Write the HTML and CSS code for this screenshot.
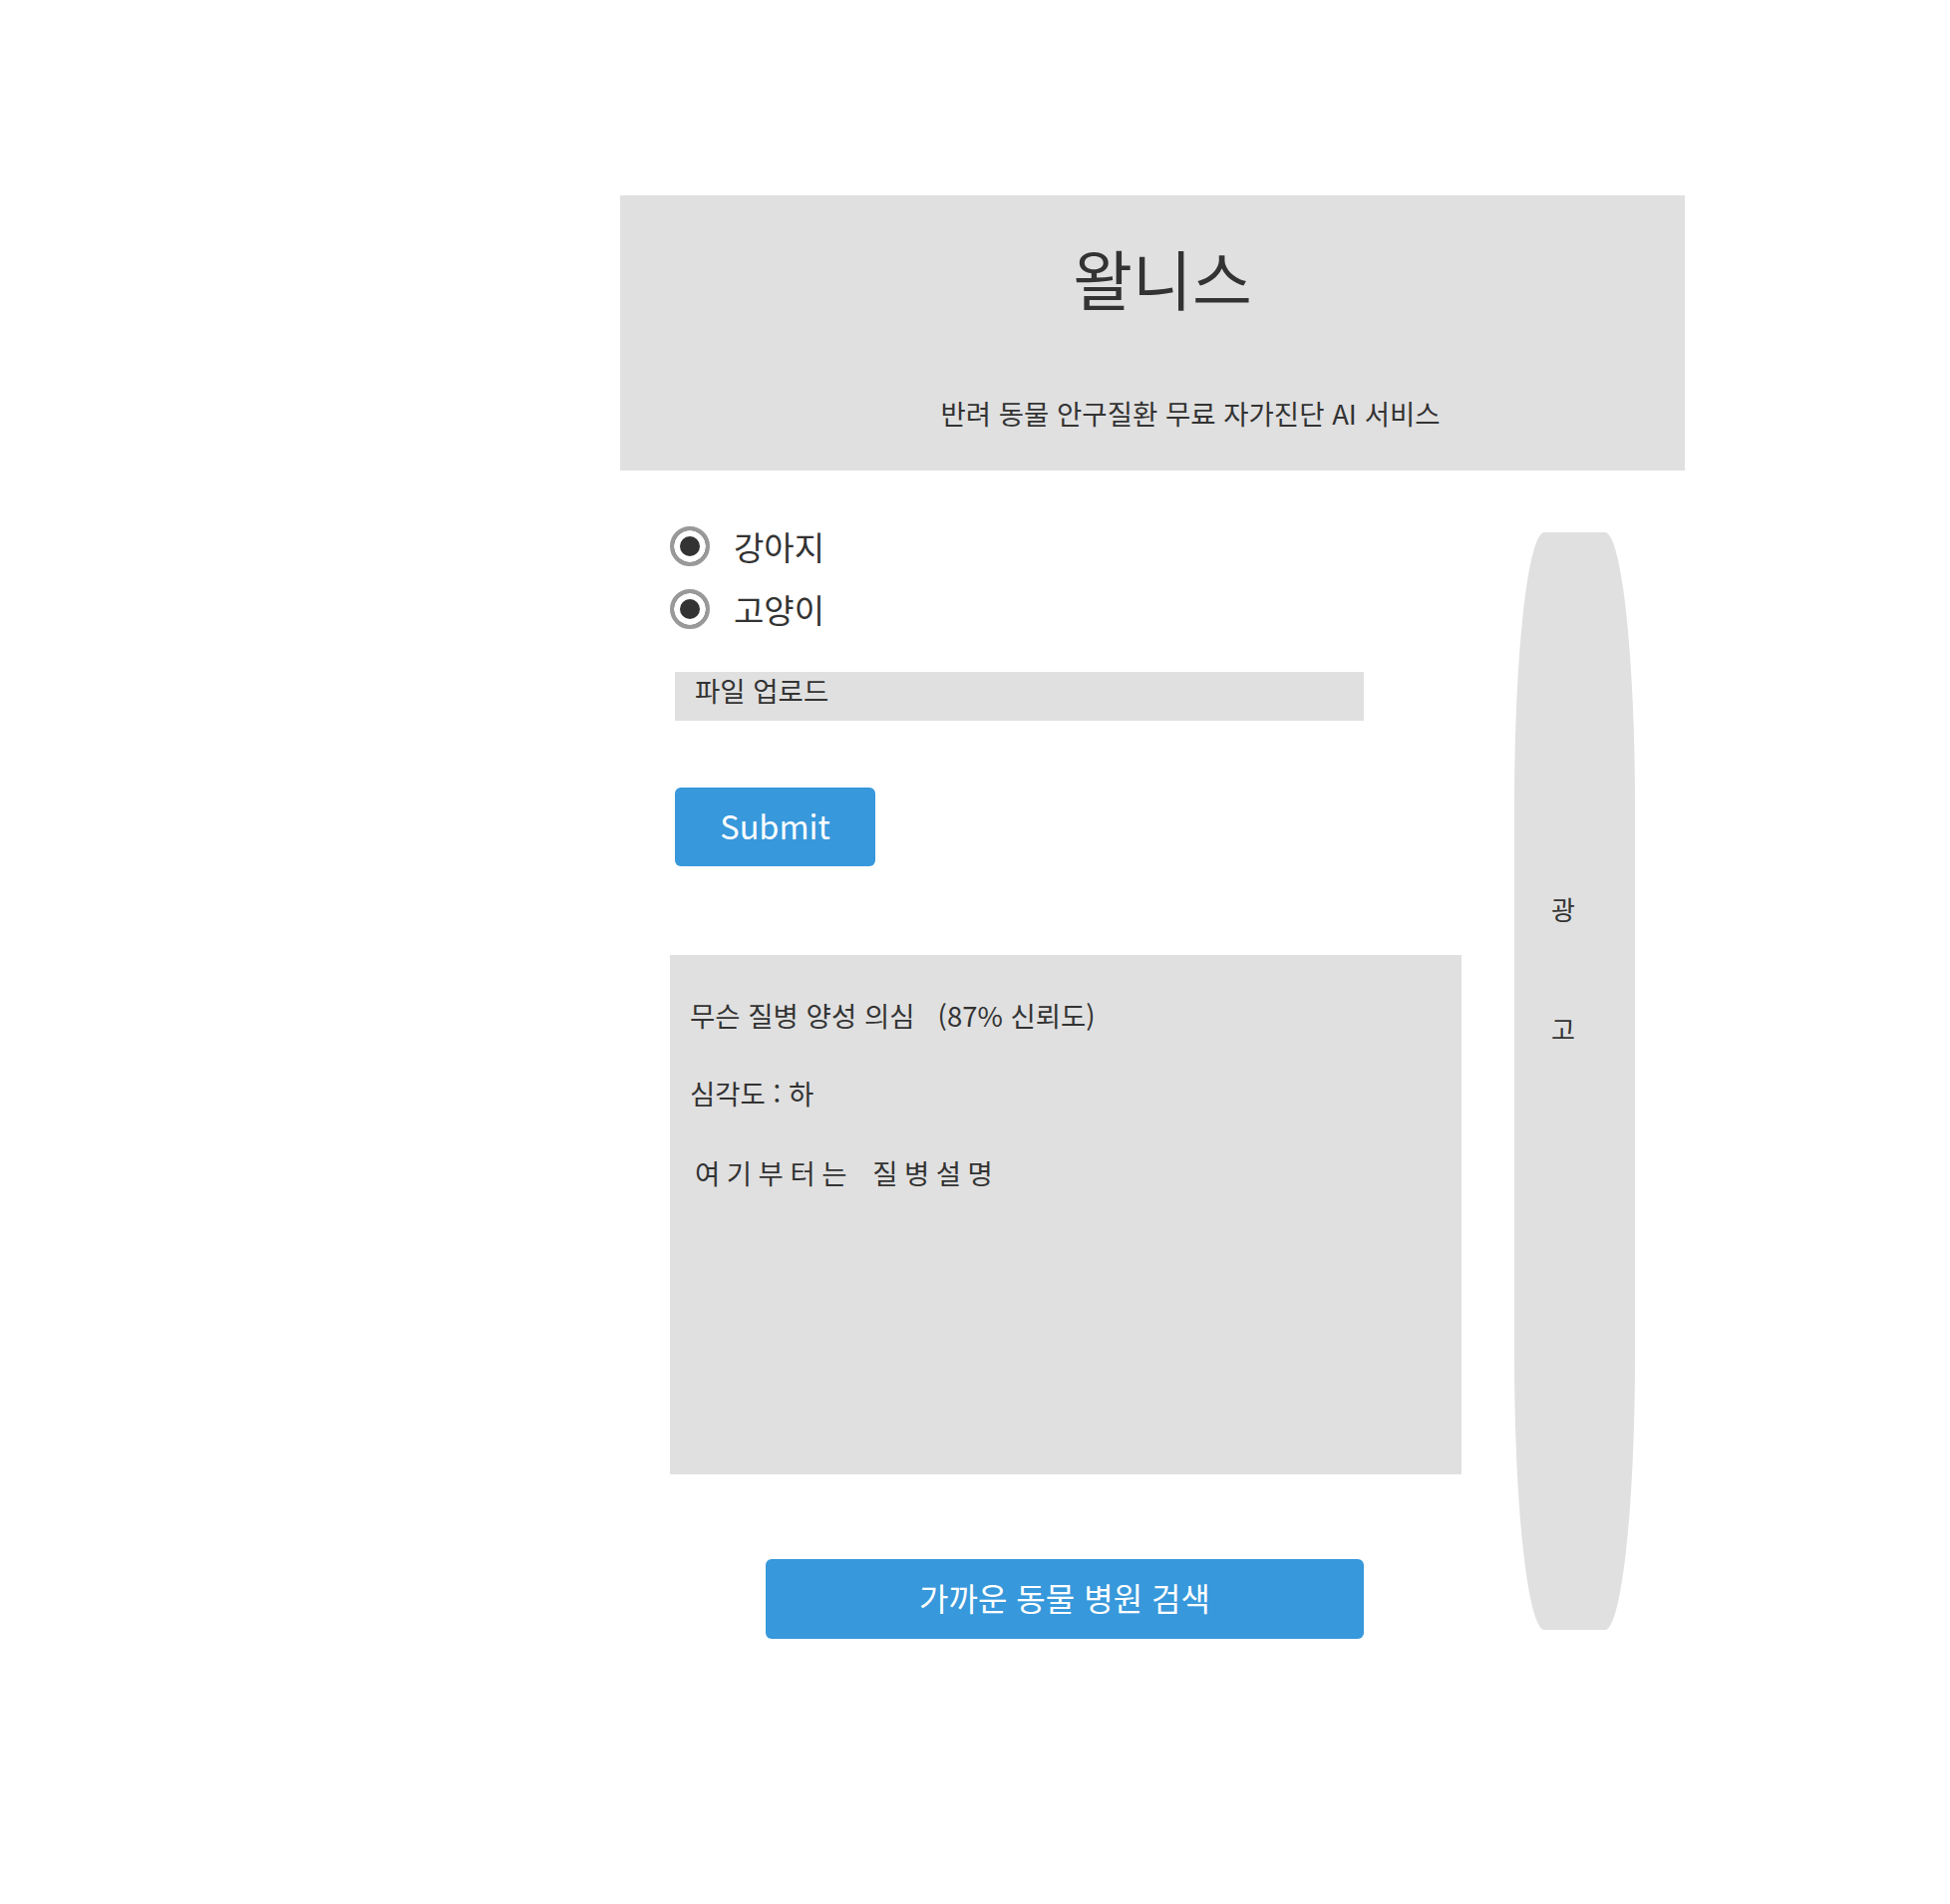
FILE: index.html
```html
<!DOCTYPE html>
<html lang="ko">
<head>
<meta charset="utf-8">
<title>왈니스</title>
<link rel="stylesheet" href="styles.css">
</head>
<body>
<div class="page">
  <header class="hero">
    <h1 class="hero-title">왈니스</h1>
    <p class="hero-sub">반려 동물 안구질환 무료 자가진단 AI 서비스</p>
  </header>
  <div class="content">
    <main class="main-col">
      <form class="pet-form">
        <label class="radio-row"><input class="radio" type="radio" name="dog" checked><span>강아지</span></label>
        <label class="radio-row"><input class="radio" type="radio" name="cat" checked><span>고양이</span></label>
        <div class="upload">파일 업로드</div>
        <button class="btn btn-submit" type="button">Submit</button>
      </form>
      <section class="result">
        <p class="result-line">무슨 질병 양성 의심&nbsp;&nbsp;&nbsp;(87% 신뢰도)</p>
        <p class="result-line result-severity">심각도 : 하</p>
        <p class="result-line result-desc">여기부터는 질병설명</p>
      </section>
      <button class="btn btn-search" type="button">가까운 동물 병원 검색</button>
    </main>
    <aside class="ad">
      <span class="ad-char">광</span>
      <span class="ad-char">고</span>
    </aside>
  </div>
</div>
</body>
</html>
```

FILE: styles.css
```css
* { box-sizing: border-box; }

html, body {
  margin: 0;
  padding: 0;
  background: #ffffff;
}

body {
  font-family: "Noto Sans CJK KR", "Noto Sans", sans-serif;
  color: #333333;
}

.page {
  width: 1068px;
  margin-left: 622px;
  padding-top: 196px;
  padding-bottom: 200px;
}

.hero {
  height: 276px;
  background: #e0e0e0;
  padding-top: 35px;
  display: flex;
  flex-direction: column;
  align-items: center;
}

.hero-title {
  margin: 0;
  padding-left: 20px;
  font-size: 65px;
  font-weight: 400;
  line-height: normal;
}

.hero-sub {
  margin: 69px 0 0;
  padding-left: 76px;
  font-size: 27.5px;
  line-height: normal;
}

.content {
  display: flex;
  align-items: flex-start;
}

.main-col {
  width: 844px;
  padding-left: 50px;
  padding-top: 56px;
}

.pet-form {
  display: flex;
  flex-direction: column;
  align-items: flex-start;
  margin: 0;
}

.radio-row {
  display: flex;
  align-items: center;
  gap: 24px;
  font-size: 33px;
  height: 40px;
  margin-bottom: 23px;
}

.radio {
  appearance: none;
  -webkit-appearance: none;
  margin: 0;
  width: 40px;
  height: 40px;
  border-radius: 50%;
  border: 4px solid #999999;
  background: #333333;
  box-shadow: inset 0 0 0 6px #ffffff;
}

.upload {
  margin-top: 20px;
  margin-left: 5px;
  width: 691px;
  height: 49px;
  background: #e0e0e0;
  padding-left: 20px;
  font-size: 27.5px;
  line-height: 37px;
}

.btn {
  border: none;
  border-radius: 6px;
  background: #3798db;
  color: #ffffff;
  font-family: inherit;
  cursor: pointer;
  padding: 0;
}

.btn-submit {
  margin-top: 67px;
  margin-left: 5px;
  width: 201px;
  height: 79px;
  padding-bottom: 4px;
  font-size: 32.5px;
}

.result {
  margin-top: 89px;
  width: 794px;
  height: 521px;
  background: #e0e0e0;
  padding: 40px 20px 0;
}

.result-line {
  margin: 0;
  font-size: 27.5px;
  line-height: normal;
}

.result-severity {
  margin-top: 38px;
}

.result-desc {
  margin-top: 40px;
  padding-left: 5px;
  letter-spacing: 6.5px;
  word-spacing: 5px;
}

.btn-search {
  display: block;
  margin-top: 85px;
  margin-left: 96px;
  width: 600px;
  height: 80px;
  padding-bottom: 4px;
  font-size: 32px;
}

.ad {
  margin-top: 62px;
  margin-left: 53px;
  width: 121px;
  height: 1101px;
  background: #e0e0e0;
  border-radius: 25%;
  display: flex;
  flex-direction: column;
  align-items: flex-start;
  padding-top: 359px;
  padding-left: 37px;
  gap: 83px;
  font-size: 26px;
}

.ad-char {
  line-height: normal;
}
```
